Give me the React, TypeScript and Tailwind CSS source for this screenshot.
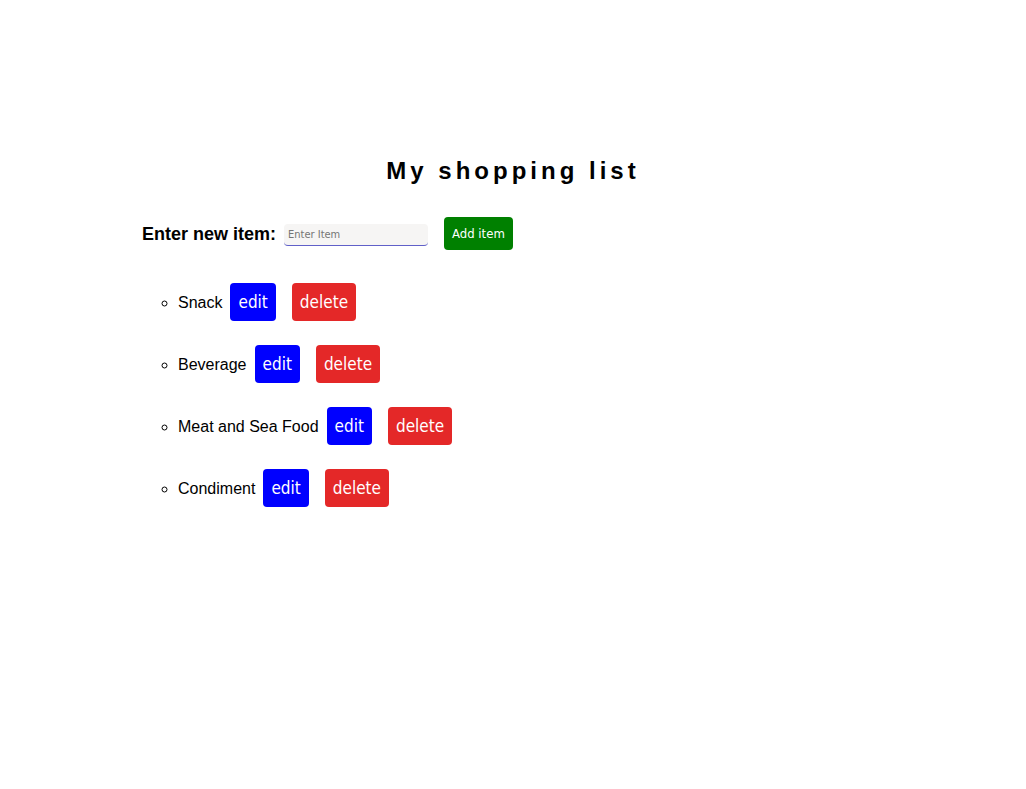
import { useState, type FormEvent } from "react";

const initialItems = ["Snack", "Beverage", "Meat and Sea Food", "Condiment"];

const editButton =
  "ml-2 rounded bg-[#0000ff] px-2 font-['DejaVu_Sans_Condensed','Open_Sans',sans-serif] text-[17px] leading-[38px] text-white";
const deleteButton =
  "ml-4 rounded bg-[#e42828] px-2 font-['DejaVu_Sans_Condensed','Open_Sans',sans-serif] text-[17px] leading-[38px] text-white";

export default function App() {
  const [items, setItems] = useState(initialItems);
  const [draft, setDraft] = useState("");

  function addItem(event: FormEvent) {
    event.preventDefault();
    if (!draft.trim()) return;
    setItems([...items, draft.trim()]);
    setDraft("");
  }

  function editItem(index: number) {
    setDraft(items[index]);
    setItems(items.filter((_, i) => i !== index));
  }

  return (
    <main className="mx-auto max-w-[742px] pt-[155px] font-['Liberation_Sans',sans-serif] text-black">
      <h1 className="text-center text-[24px] leading-8 font-bold tracking-[4px]">
        My shopping list
      </h1>
      <form onSubmit={addItem} className="mt-[30px] flex items-center">
        <label htmlFor="item" className="text-lg leading-6 font-bold">
          Enter new item:
        </label>
        <input
          id="item"
          type="text"
          value={draft}
          onChange={(event) => setDraft(event.target.value)}
          placeholder="Enter Item"
          className="mt-0.5 ml-2 h-[22px] w-36 rounded border-b border-[#6060c8] bg-[#f6f5f4] px-1 font-['DejaVu_Sans_Condensed','Open_Sans',sans-serif] text-[11px] outline-none placeholder:text-[#757575]"
        />
        <button
          type="submit"
          className="ml-4 rounded bg-[#008000] px-2 font-['DejaVu_Sans_Condensed','Open_Sans',sans-serif] text-[13px] leading-[33px] text-white"
        >
          Add item
        </button>
      </form>
      <ul className="mt-[33px] flex list-[circle] flex-col gap-6 pl-9">
        {items.map((item, index) => (
          <li key={item} className="h-[38px] text-base leading-[38px]">
            <div className="inline-flex items-start">
              <span className="pt-0.5 leading-9">{item}</span>
              <button
                type="button"
                onClick={() => editItem(index)}
                className={editButton}
              >
                edit
              </button>
              <button
                type="button"
                onClick={() => setItems(items.filter((_, i) => i !== index))}
                className={deleteButton}
              >
                delete
              </button>
            </div>
          </li>
        ))}
      </ul>
    </main>
  );
}
